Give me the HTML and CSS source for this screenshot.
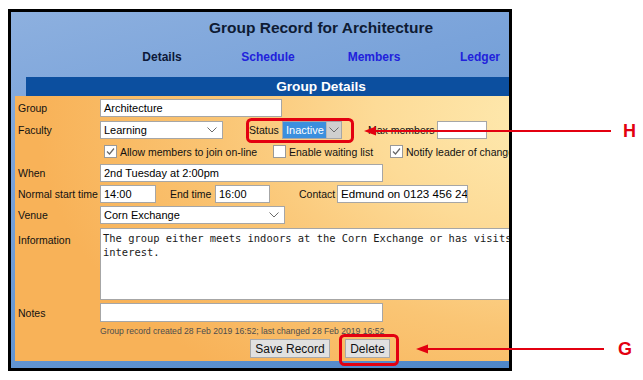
FILE: index.html
```html
<!DOCTYPE html>
<html lang="en">
<head>
<meta charset="utf-8">
<title>Group Record for Architecture</title>
<link rel="stylesheet" href="styles.css">
</head>
<body>
<div class="frame">
  <div class="page">
    <header class="head">
      <h1 class="title">Group Record for Architecture</h1>
      <nav class="tabs">
        <span class="tab current">Details</span>
        <span class="tab">Schedule</span>
        <span class="tab">Members</span>
        <span class="tab">Ledger</span>
      </nav>
    </header>
    <div class="bar">Group Details</div>
    <div class="panel">
      <div class="row">
        <span class="lbl">Group</span>
        <div class="field w-group">Architecture</div>
      </div>
      <div class="row r-faculty">
        <span class="lbl">Faculty</span>
        <div class="field select w-faculty">Learning<svg class="chev" viewBox="0 0 10 6"><path d="M0.5 0.5 L5 5 L9.5 0.5"/></svg></div>
        <span class="lbl-in l-status">Status</span>
        <div class="field status">
          <span class="hl">Inactive</span>
          <span class="chevbox"><svg class="chev" viewBox="0 0 10 6"><path d="M0.5 0.5 L5 5 L9.5 0.5"/></svg></span>
        </div>
        <span class="lbl-in l-max">Max members</span>
        <div class="field w-max"></div>
      </div>
      <div class="row checks">
        <span class="chk-item ci-1"><span class="box"><svg viewBox="0 0 11 11"><path d="M2 5.5 L4.5 8 L9 2.5"/></svg></span>Allow members to join on-line</span>
        <span class="chk-item ci-2"><span class="box"></span>Enable waiting list</span>
        <span class="chk-item ci-3"><span class="box"><svg viewBox="0 0 11 11"><path d="M2 5.5 L4.5 8 L9 2.5"/></svg></span>Notify leader of changes</span>
      </div>
      <div class="row r-gap3">
        <span class="lbl">When</span>
        <div class="field w-long">2nd Tuesday at 2:00pm</div>
      </div>
      <div class="row r-gap3">
        <span class="lbl">Normal start time</span>
        <div class="field w-start">14:00</div>
        <span class="lbl-in l-end">End time</span>
        <div class="field w-end">16:00</div>
        <span class="lbl-in l-contact">Contact</span>
        <div class="field w-contact">Edmund on 0123 456 249</div>
      </div>
      <div class="row r-gap3">
        <span class="lbl">Venue</span>
        <div class="field select w-venue">Corn Exchange<svg class="chev" viewBox="0 0 10 6"><path d="M0.5 0.5 L5 5 L9.5 0.5"/></svg></div>
      </div>
      <div class="row r-info">
        <span class="lbl l-info">Information</span>
        <div class="field area">The group either meets indoors at the Corn Exchange or has visits to places of
interest.</div>
      </div>
      <div class="row r-notes">
        <span class="lbl">Notes</span>
        <div class="field w-long"></div>
      </div>
      <p class="meta">Group record created 28 Feb 2019 16:52; last changed 28 Feb 2019 16:52</p>
      <div class="actions">
        <button class="btn b-save" type="button">Save Record</button>
        <button class="btn b-del" type="button">Delete</button>
      </div>
    </div>
  </div>
</div>

<svg class="annot" viewBox="0 0 643 380" width="643" height="380">
  <rect x="247.5" y="119.5" width="105" height="22" rx="4" ry="4"/>
  <line x1="372" y1="131" x2="611" y2="131"/>
  <polygon points="364,131 376,126.5 376,135.5"/>
  <rect x="340.5" y="335.5" width="57" height="29" rx="4" ry="4"/>
  <line x1="424" y1="349" x2="604" y2="349"/>
  <polygon points="416,349 428,344.5 428,353.5"/>
</svg>
<span class="tag tag-h">H</span>
<span class="tag tag-g">G</span>
</body>
</html>
```

FILE: styles.css
```css
html, body {
  margin: 0;
  padding: 0;
  background: #fff;
}
body {
  width: 643px;
  height: 380px;
  overflow: hidden;
  position: relative;
  font-family: "Liberation Sans", Arial, sans-serif;
}

.frame {
  margin: 9px 0 0 8px;
  width: 498px;
  height: 356px;
  border: 3px solid #000;
  overflow: hidden;
  background: linear-gradient(165deg, #8db0df 0%, #7aa3da 30%, #6395d2 70%, #4f86c7 100%);
}
.page {
  width: 620px;
}

.head {
  height: 65px;
  box-sizing: border-box;
  padding-top: 7px;
}
.title {
  margin: 0;
  text-align: center;
  font-size: 15.5px;
  line-height: 18px;
  font-weight: bold;
  color: #0e1b33;
}
.tabs {
  display: grid;
  grid-template-columns: repeat(4, 106px);
  margin: 13px 0 0 98px;
  font-size: 12px;
  line-height: 14px;
  font-weight: bold;
}
.tab {
  text-align: center;
  color: #2121dc;
}
.tab.current {
  color: #0c1838;
}

.bar {
  margin: 0 15px;
  height: 19px;
  line-height: 19px;
  background: #0c4f9f;
  color: #fff;
  text-align: center;
  font-size: 13.7px;
  font-weight: bold;
}

.panel {
  margin-left: 4px;
  height: 265px;
  box-sizing: border-box;
  padding: 3px 0 0 3px;
  background: radial-gradient(ellipse 520px 330px at 88% 8%, #feebb2 0%, #fddb97 35%, #fac574 65%, #f8b258 100%);
}

.row {
  display: flex;
  align-items: center;
  height: 18px;
  font-size: 10.5px;
  color: #111;
}
.lbl {
  width: 82px;
  flex: none;
  white-space: nowrap;
}
.lbl-in {
  flex: none;
  white-space: nowrap;
}

.field {
  box-sizing: border-box;
  height: 18px;
  border: 1px solid #a6a6a6;
  background: #fff;
  padding: 0 3px;
  font-size: 11px;
  line-height: 16px;
  color: #000;
  white-space: nowrap;
  overflow: hidden;
  flex: none;
}
.select {
  position: relative;
}
.chev {
  position: absolute;
  right: 5px;
  top: 5px;
  width: 10px;
  height: 6px;
  fill: none;
  stroke: #6b6b6b;
  stroke-width: 1;
}

.w-group { width: 182px; }
.w-faculty { width: 123px; }
.w-long { width: 283px; }
.w-start { width: 56px; }
.w-end { width: 55px; }
.w-contact { width: 131px; font-size: 11.6px; }
.w-max { width: 50px; }
.w-venue { width: 185px; }

.r-faculty { margin-top: 4px; }
.l-status { margin-left: 26px; width: 33px; }
.status {
  width: 60px;
  padding: 0;
  display: flex;
}
.hl {
  background: #3b8fde;
  color: #fff;
  width: 43px;
  padding-left: 3px;
  box-sizing: border-box;
  line-height: 16px;
}
.chevbox {
  position: relative;
  flex: 1;
  background: #cfcfcf;
  border-left: 1px solid #b8b8b8;
}
.chevbox .chev {
  right: 2px;
}
.l-max { margin-left: 26px; width: 69px; }

.checks {
  margin-top: 3px;
  height: 19px;
  padding-left: 86px;
}
.chk-item {
  display: inline-flex;
  align-items: center;
  flex: none;
  white-space: nowrap;
}
.ci-1 { width: 169px; }
.ci-2 { width: 117px; }
.box {
  box-sizing: border-box;
  width: 13px;
  height: 13px;
  border: 1px solid #999;
  background: #fff;
  margin-right: 3px;
  display: inline-flex;
  align-items: center;
  justify-content: center;
}
.box svg {
  width: 11px;
  height: 11px;
  fill: none;
  stroke: #666;
  stroke-width: 1.2;
}

.r-gap3 { margin-top: 3px; }
.l-end { margin-left: 14px; width: 45px; }
.l-contact { margin-left: 29px; width: 38px; }

.r-info {
  margin-top: 4px;
  height: 72px;
  align-items: flex-start;
}
.l-info { padding-top: 6px; }
.area {
  height: 72px;
  width: 515px;
  padding: 2px 2px;
  white-space: pre;
  font-family: "DejaVu Sans Mono", "Liberation Mono", monospace;
  font-size: 10.45px;
  line-height: 14px;
  color: #1a1a1a;
}

.r-notes {
  margin-top: 3px;
  height: 19px;
}
.r-notes .field { height: 19px; }

.meta {
  margin: 3px 0 0 82px;
  font-size: 8.6px;
  line-height: 13px;
  color: #4d4d4d;
  white-space: nowrap;
}

.actions {
  display: flex;
  gap: 15px;
  margin-top: 1px;
  padding-left: 232px;
}
.btn {
  box-sizing: border-box;
  height: 19px;
  padding: 0;
  border: 1px solid #a9a9a9;
  background: #e1e1e1;
  font-family: "Liberation Sans", Arial, sans-serif;
  font-size: 12px;
  color: #111;
}
.b-save { width: 80px; }
.b-del { width: 45px; }

.annot {
  position: absolute;
  left: 0;
  top: 0;
  pointer-events: none;
}
.annot rect {
  fill: none;
  stroke: #e30010;
  stroke-width: 3;
}
.annot line {
  stroke: #e30010;
  stroke-width: 2;
}
.annot polygon {
  fill: #e30010;
}
.tag {
  position: absolute;
  font-family: "Liberation Sans", Arial, sans-serif;
  font-weight: bold;
  font-size: 18px;
  line-height: 20px;
  color: #e30010;
}
.tag-h { left: 623px; top: 121px; }
.tag-g { left: 618px; top: 339px; }
```
